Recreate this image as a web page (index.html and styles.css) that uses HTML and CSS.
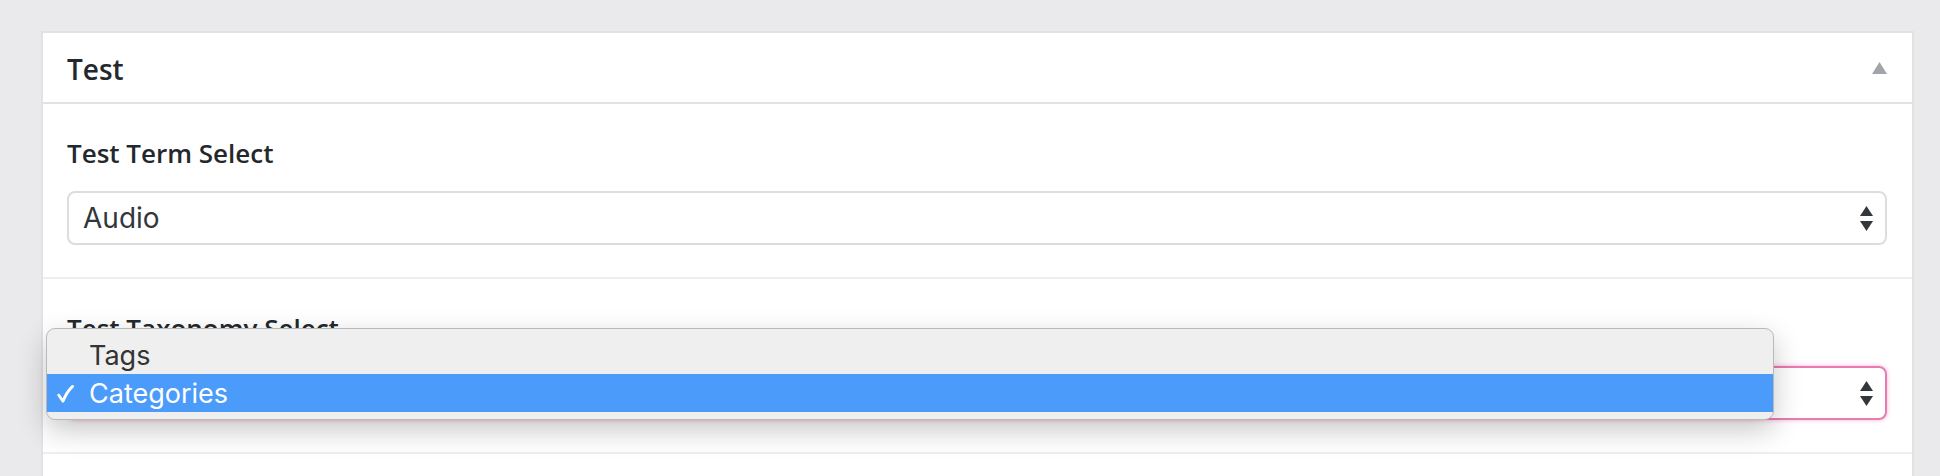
FILE: index.html
```html
<!DOCTYPE html>
<html>
<head>
<meta charset="utf-8">
<link rel="stylesheet" href="styles.css">
</head>
<body>
<div class="panel">
  <div class="panel-head">
    <h2 class="panel-title">Test</h2>
    <svg class="toggle" width="15" height="12" viewBox="0 0 15 12"><polygon points="0,12 7.5,0 15,12" fill="#a0a5aa"/></svg>
  </div>
  <div class="field">
    <div class="label">Test Term Select</div>
    <div class="select">
      <span class="value">Audio</span>
      <svg class="stepper" width="13" height="25" viewBox="0 0 13 25"><polygon points="0,10 6.5,0 13,10" fill="#32373c"/><polygon points="0,15 13,15 6.5,25" fill="#32373c"/></svg>
    </div>
  </div>
  <div class="field">
    <div class="label">Test Taxonomy Select</div>
    <div class="select focus">
      <span class="value">Categories</span>
      <svg class="stepper" width="13" height="25" viewBox="0 0 13 25"><polygon points="0,10 6.5,0 13,10" fill="#32373c"/><polygon points="0,15 13,15 6.5,25" fill="#32373c"/></svg>
    </div>
  </div>
  <div class="rest"></div>
</div>
<div class="menu">
  <div class="option"><span class="check"></span>Tags</div>
  <div class="option selected"><span class="check"><svg width="17" height="18" viewBox="0 0 17 18"><path d="M1.8 10.2 L6 16.2 C8.5 10 11.5 5 15.6 1.4" fill="none" stroke="#fff" stroke-width="2.8" stroke-linecap="round" stroke-linejoin="round"/></svg></span>Categories</div>
</div>
</body>
</html>
```
FILE: styles.css
```css
html, body {
  margin: 0;
  padding: 0;
}
body {
  background: #eae9ec;
  padding: 31px 26px 0 41px;
  height: 476px;
  box-sizing: border-box;
  overflow: hidden;
  font-family: "Open Sans", "Noto Sans", sans-serif;
  color: #23282d;
}
.panel {
  background: #fff;
  border: 2px solid #e2e2e2;
  border-bottom: none;
  height: 100%;
  box-sizing: border-box;
}
.panel-head {
  height: 69px;
  border-bottom: 2px solid #e2e2e2;
  display: flex;
  align-items: center;
  justify-content: space-between;
  padding: 0 25px 0 24px;
}
.panel-title {
  margin: 0;
  font-size: 28px;
  font-weight: 600;
  line-height: 36px;
  position: relative;
  top: 1px;
}
.toggle {
  display: block;
}
.field {
  border-bottom: 2px solid #eeeeee;
  padding: 31px 25px 32px 24px;
}
.label {
  font-size: 26px;
  font-weight: 600;
  line-height: 36px;
  margin-bottom: 20px;
}
.select {
  height: 54px;
  box-sizing: border-box;
  border: 2px solid #dddddd;
  border-radius: 8px;
  display: flex;
  align-items: center;
  justify-content: space-between;
  padding: 0 12px 0 14px;
  font-family: "Inter", "Roboto", sans-serif;
  font-size: 28px;
  color: #32373c;
}
.select.focus {
  border-color: #e97bb3;
  box-shadow: 0 0 4px rgba(233, 110, 170, 0.55);
}
.stepper {
  display: block;
}
.menu {
  position: absolute;
  left: 46px;
  top: 328px;
  width: 1728px;
  height: 92px;
  box-sizing: border-box;
  background: #efefef;
  border: 1px solid #b9b9b9;
  border-radius: 9px;
  box-shadow: 0 10px 28px rgba(0, 0, 0, 0.22);
  padding: 7px 0;
  font-family: "Inter", "Roboto", sans-serif;
  font-size: 27px;
  color: #333;
}
.option {
  height: 38px;
  display: flex;
  align-items: center;
}
.option.selected {
  background: #4b9bfb;
  color: #fff;
}
.check {
  width: 42px;
  padding-left: 10px;
  box-sizing: border-box;
  display: flex;
  align-items: center;
}
.check svg {
  display: block;
  position: relative;
  top: 1px;
}
```
